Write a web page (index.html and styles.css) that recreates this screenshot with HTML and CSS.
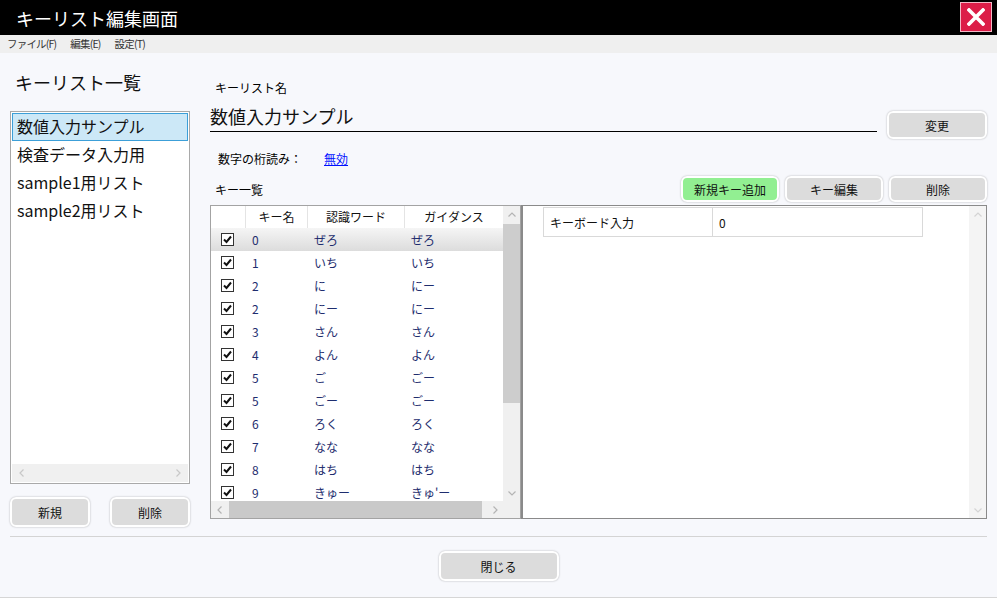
FILE: index.html
```html
<!DOCTYPE html>
<html lang="ja">
<head>
<meta charset="utf-8">
<title>キーリスト編集画面</title>
<link rel="stylesheet" href="styles.css">
</head>
<body>
<div class="window">
  <div class="titlebar">
    <span class="title">キーリスト編集画面</span>
    <button class="close" type="button">
      <svg width="18" height="18" viewBox="0 0 18 18"><path d="M2 2 L16 16 M16 2 L2 16" stroke="#fff" stroke-width="3.6" stroke-linecap="square"/></svg>
    </button>
  </div>
  <div class="menubar">
    <span>ファイル(F)</span><span>編集(E)</span><span>設定(T)</span>
  </div>

  <div class="content">
    <div class="left">
      <div class="left-title">キーリスト一覧</div>
      <div class="listbox">
        <ul class="list-items">
          <li class="selected">数値入力サンプル</li>
          <li>検査データ入力用</li>
          <li>sample1用リスト</li>
          <li>sample2用リスト</li>
        </ul>
        <div class="list-hbar">
          <svg width="8" height="10" viewBox="0 0 8 10"><polyline points="5.5,1.5 2,5 5.5,8.5" fill="none" stroke="#c8c8c8" stroke-width="1.2"/></svg>
          <svg width="8" height="10" viewBox="0 0 8 10"><polyline points="2.5,1.5 6,5 2.5,8.5" fill="none" stroke="#c8c8c8" stroke-width="1.2"/></svg>
        </div>
      </div>
      <div class="left-buttons">
        <button class="btn" type="button">新規</button>
        <button class="btn" type="button">削除</button>
      </div>
    </div>

    <div class="right">
      <div class="label">キーリスト名</div>
      <div class="name-row">
        <div class="name-field">数値入力サンプル</div>
        <button class="btn btn-change" type="button">変更</button>
      </div>
      <div class="option-row">
        <span>数字の桁読み：</span><a class="link" href="#">無効</a>
      </div>
      <div class="keys-head">
        <span class="keys-label">キー一覧</span>
        <div class="key-buttons">
          <button class="btn btn-small btn-add" type="button">新規キー追加</button>
          <button class="btn btn-small" type="button">キー編集</button>
          <button class="btn btn-small" type="button">削除</button>
        </div>
      </div>

      <div class="panes">
        <div class="keygrid">
          <div class="grid-body">
            <div class="grid-row grid-head">
              <span class="hcell"></span>
              <span class="hcell">キー名</span>
              <span class="hcell">認識ワード</span>
              <span class="hcell">ガイダンス</span>
            </div>
            <div class="grid-row current"><span class="cb"><i class="check"></i></span><span class="cell">0</span><span class="cell">ぜろ</span><span class="cell">ぜろ</span></div>
            <div class="grid-row"><span class="cb"><i class="check"></i></span><span class="cell">1</span><span class="cell">いち</span><span class="cell">いち</span></div>
            <div class="grid-row"><span class="cb"><i class="check"></i></span><span class="cell">2</span><span class="cell">に</span><span class="cell">にー</span></div>
            <div class="grid-row"><span class="cb"><i class="check"></i></span><span class="cell">2</span><span class="cell">にー</span><span class="cell">にー</span></div>
            <div class="grid-row"><span class="cb"><i class="check"></i></span><span class="cell">3</span><span class="cell">さん</span><span class="cell">さん</span></div>
            <div class="grid-row"><span class="cb"><i class="check"></i></span><span class="cell">4</span><span class="cell">よん</span><span class="cell">よん</span></div>
            <div class="grid-row"><span class="cb"><i class="check"></i></span><span class="cell">5</span><span class="cell">ご</span><span class="cell">ごー</span></div>
            <div class="grid-row"><span class="cb"><i class="check"></i></span><span class="cell">5</span><span class="cell">ごー</span><span class="cell">ごー</span></div>
            <div class="grid-row"><span class="cb"><i class="check"></i></span><span class="cell">6</span><span class="cell">ろく</span><span class="cell">ろく</span></div>
            <div class="grid-row"><span class="cb"><i class="check"></i></span><span class="cell">7</span><span class="cell">なな</span><span class="cell">なな</span></div>
            <div class="grid-row"><span class="cb"><i class="check"></i></span><span class="cell">8</span><span class="cell">はち</span><span class="cell">はち</span></div>
            <div class="grid-row"><span class="cb"><i class="check"></i></span><span class="cell">9</span><span class="cell">きゅー</span><span class="cell">きゅ'ー</span></div>
          </div>
          <div class="vbar">
            <span class="arrow"><svg width="10" height="8" viewBox="0 0 10 8"><polyline points="1.5,5.5 5,2 8.5,5.5" fill="none" stroke="#b4b4b4" stroke-width="1.2"/></svg></span>
            <span class="vthumb"></span>
            <span class="fill"></span>
            <span class="arrow"><svg width="10" height="8" viewBox="0 0 10 8"><polyline points="1.5,2.5 5,6 8.5,2.5" fill="none" stroke="#b4b4b4" stroke-width="1.2"/></svg></span>
          </div>
          <div class="hbar">
            <span class="arrow"><svg width="8" height="10" viewBox="0 0 8 10"><polyline points="5.5,1.5 2,5 5.5,8.5" fill="none" stroke="#b4b4b4" stroke-width="1.2"/></svg></span>
            <span class="hthumb"></span>
            <span class="fill"></span>
            <span class="arrow"><svg width="8" height="10" viewBox="0 0 8 10"><polyline points="2.5,1.5 6,5 2.5,8.5" fill="none" stroke="#b4b4b4" stroke-width="1.2"/></svg></span>
          </div>
          <div class="corner"></div>
        </div>

        <div class="detail">
          <div class="detail-body">
            <table class="prop">
              <tr><td class="prop-name">キーボード入力</td><td class="prop-value">0</td></tr>
            </table>
          </div>
          <div class="vbar light">
            <span class="arrow"><svg width="10" height="8" viewBox="0 0 10 8"><polyline points="1.5,5.5 5,2 8.5,5.5" fill="none" stroke="#d4d4d4" stroke-width="1.2"/></svg></span>
            <span class="fill"></span>
            <span class="arrow"><svg width="10" height="8" viewBox="0 0 10 8"><polyline points="1.5,2.5 5,6 8.5,2.5" fill="none" stroke="#d4d4d4" stroke-width="1.2"/></svg></span>
          </div>
        </div>
      </div>
    </div>
  </div>

  <div class="separator"></div>
  <div class="footer">
    <button class="btn btn-close" type="button">閉じる</button>
  </div>
</div>
</body>
</html>
```

FILE: styles.css
```css
body{margin:0;background:#f7f8fc;font-family:"Noto Sans CJK JP","Noto Sans",sans-serif;font-size:12px;color:#000;}
.window{width:997px;height:598px;box-sizing:border-box;border-bottom:1px solid #d6d6d6;display:flex;flex-direction:column;overflow:hidden;}

/* title + menu */
.titlebar{height:35px;flex:none;background:#000;display:flex;align-items:center;justify-content:space-between;padding:0 5px 0 16px;}
.title{color:#fff;font-size:18px;line-height:24px;}
.close{width:32px;height:30px;padding:0;margin-top:-2px;background:#dc1d48;border:1px solid #f2b9c6;display:flex;align-items:center;justify-content:center;}
.menubar{height:18px;flex:none;background:#efefef;display:flex;gap:14px;padding-left:7px;font-size:10.5px;letter-spacing:-0.8px;line-height:18px;color:#333;}

.content{display:flex;gap:20px;padding:0 10px;}

/* left list */
.left{width:180px;flex:none;display:flex;flex-direction:column;}
.left-title{font-size:18px;line-height:24px;padding:17px 0 0 5px;margin-bottom:17px;color:#111;}
.listbox{height:373px;box-sizing:border-box;border:1px solid #a9a9a9;background:#fff;padding:1px;display:flex;flex-direction:column;}
.list-items{list-style:none;margin:0;padding:0;flex:1;}
.list-items li{height:26px;line-height:24px;font-size:16px;padding-left:4px;border:1px solid transparent;color:#111;}
.list-items li.selected{background:#cce8f7;border-color:#3c9fd8;}
.list-hbar{height:18px;background:#f0f0f0;display:flex;align-items:center;justify-content:space-between;padding:0 6px;}
.left-buttons{display:flex;justify-content:space-between;margin-top:13px;}

/* buttons */
.btn{width:80px;height:30px;box-sizing:border-box;background:#dcdcdc;border:2px solid #fff;border-radius:6px;box-shadow:0 0 2px rgba(0,0,0,.3);font-family:inherit;font-size:12px;color:#111;padding:0;}
.btn-change{width:100px;height:28px;margin:15px 0 0 10px;}
.btn-small{width:98px;height:26px;}
.btn-add{background:#92ef92;}
.btn-close{width:120px;}

/* right side */
.right{flex:1;display:flex;flex-direction:column;padding-top:27px;}
.label{line-height:16px;padding-left:5px;}
.name-row{display:flex;align-items:flex-start;}
.name-field{width:667px;box-sizing:border-box;font-size:18px;line-height:24px;padding:8px 0 3px;border-bottom:1px solid #000;color:#111;}
.option-row{display:flex;margin-top:12px;line-height:16px;padding-left:8px;}
.link{margin-left:22px;color:#0010ff;}
.keys-head{display:flex;align-items:center;justify-content:space-between;height:26px;margin-top:9px;}
.keys-label{padding-left:5px;}
.key-buttons{display:flex;gap:6px;}

.panes{display:flex;height:314px;margin-top:3px;}

/* key grid */
.keygrid{width:311px;flex:none;box-sizing:border-box;border:1px solid #a3a3a3;background:#fff;display:grid;grid-template-columns:292px 17px;grid-template-rows:1fr 17px;}
.grid-body{overflow:hidden;}
.grid-row{display:grid;grid-template-columns:35px 62px 97px 98px;height:23px;align-items:center;color:#1e2d6e;}
.grid-row .cell{line-height:21px;}
.grid-head{height:22px;color:#111;}
.hcell{height:100%;line-height:21px;text-align:center;border-right:1px solid #e4e4e4;box-sizing:border-box;}
.hcell:last-child{border-right:none;}
.grid-row.current{background:linear-gradient(#f5f5f5,#dcdcdc);}
.cell{padding-left:6px;white-space:nowrap;}
.cb{display:flex;padding-left:10px;}
.check{display:block;width:13px;height:13px;box-sizing:border-box;border:1px solid #333;background:#fff url("data:image/svg+xml;utf8,<svg xmlns='http://www.w3.org/2000/svg' width='11' height='11' viewBox='0 0 11 11'><path d='M2 5.5 L4.5 8 L9 2.5' fill='none' stroke='%23111' stroke-width='2'/></svg>") no-repeat center;}

.vbar{background:#f0f0f0;display:flex;flex-direction:column;}
.vbar .arrow{height:17px;flex:none;display:flex;align-items:center;justify-content:center;}
.vthumb{height:179px;margin-top:1px;background:#cdcdcd;}
.fill{flex:1;}
.hbar{background:#f0f0f0;display:flex;}
.hbar .arrow{width:17px;flex:none;display:flex;align-items:center;justify-content:center;}
.hthumb{width:253px;margin-left:1px;background:#c9c9c9;}
.corner{background:#f0f0f0;}

/* detail pane */
.detail{flex:1;box-sizing:border-box;border:1px solid #8a8a8a;border-left-width:2px;background:#fff;display:flex;}
.detail-body{flex:1;padding:1px 0 0 20px;}
.prop{border-collapse:collapse;}
.prop td{height:29px;box-sizing:border-box;border:1px solid #d9d9d9;padding:0 6px;font-size:12px;color:#111;}
.prop-name{width:169px;}
.prop-value{width:210px;}
.vbar.light{width:17px;background:#f4f4f4;}

.separator{margin:9px 10px 0;border-top:1px solid #d4d4d4;}
.footer{display:flex;justify-content:center;padding-top:14px;}
```
